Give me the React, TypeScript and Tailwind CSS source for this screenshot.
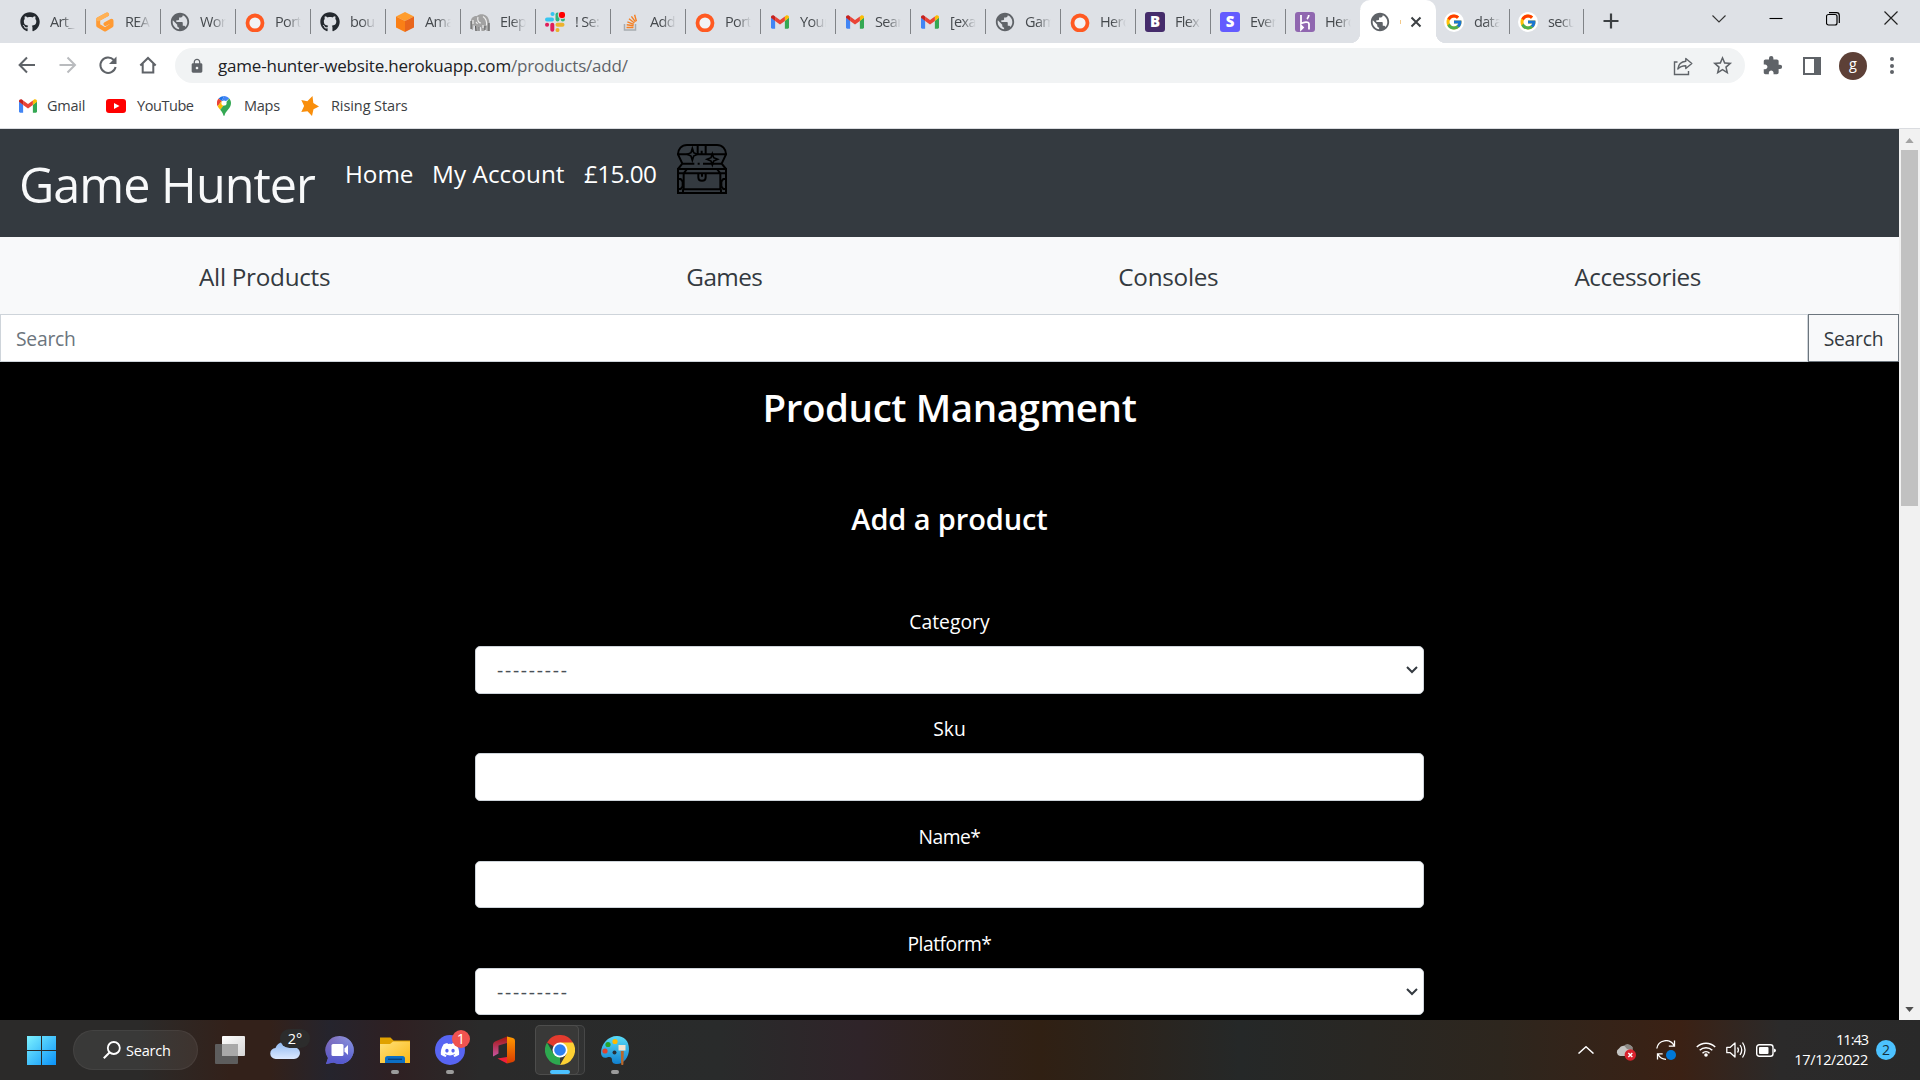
import React from "react";
import { FaGithub, FaDiscord } from "react-icons/fa";
import { FcGoogle } from "react-icons/fc";
import { MdExtension, MdPublic, MdLock, MdStarBorder } from "react-icons/md";

function Gmail({ className }: { className: string }) {
  return (
    <svg viewBox="0 0 24 18" className={className}>
      <path d="M0 3v13.4C0 17.3.7 18 1.6 18h3.9V7.4L0 3z" fill="#4285f4" />
      <path d="M18.5 18h3.9c.9 0 1.6-.7 1.6-1.6V3l-5.5 4.4V18z" fill="#34a853" />
      <path d="M18.5 1.5v6L24 3.300V2.500C24 .2 21.400-.8 19.700.6l-1.200.9z" fill="#fbbc04" />
      <path d="M5.500 7.500v-6L12 6.300l6.500-4.800v6L12 12.300 5.500 7.500z" fill="#ea4335" />
      <path d="M0 2.500v.8l5.500 4.200v-6L4.300.6C2.600-.8 0 .2 0 2.500z" fill="#c5221f" />
    </svg>
  );
}

function Gitpod() {
  return (
    <svg viewBox="0 0 20 20" className="size-5">
      <path d="M12 2.500 3.200 7.200v6.300l6.800 4 6.500-4V8.800l-6 3.200" fill="none" stroke="#ff9a33" strokeWidth="4" strokeLinejoin="round" strokeLinecap="round" />
      <path d="M12 2.500 3.200 7.200" fill="none" stroke="#ffb155" strokeWidth="4" strokeLinecap="round" />
    </svg>
  );
}

function Ring() {
  return (
    <svg viewBox="0 0 20 20" className="size-5">
      <circle cx="10" cy="11" r="7.500" fill="#fff" fillOpacity=".6" stroke="#ff5a22" strokeWidth="3.800" />
    </svg>
  );
}

function Cube() {
  return (
    <svg viewBox="0 0 20 20" className="size-5">
      <path d="M10 0l9 4.500L10 9 1 4.500z" fill="#ff9d2e" />
      <path d="M1 4.500L10 9v11l-9-4.500z" fill="#fa7f16" />
      <path d="M19 4.500L10 9v11l9-4.500z" fill="#e8651c" />
    </svg>
  );
}

function Elephant() {
  return (
    <svg viewBox="0 0 20 20" className="size-5">
      <path d="M1 9c0-3 2.500-5.500 6-5 2-2.500 7-2.500 9.500 0C19 6 20 10 19.500 19h-3l-.5-5-1.500 5h-3l-.5-4H8.500L8 19H5.500L5 14l-1.500-1L3 18l-2-1z" fill="#a2a2a2" />
      <path d="M8 5c-1 3 .5 6 3 6M3 8v4M13 4.500c3 2 4 5 3.500 9M6 10l1.500 2M10 16v3M13 13v3" stroke="#ededed" strokeWidth="1.200" fill="none" />
      <path d="M1 9v8M19 11v8M5.500 14l.5 5M9 15v4M15 14v4" stroke="#555" strokeWidth="1" fill="none" />
    </svg>
  );
}

function Slack() {
  return (
    <svg viewBox="0 0 20 20" className="size-5">
      <g strokeWidth="4" strokeLinecap="round">
        <path d="M2 7.500h5" stroke="#36c5f0" />
        <path d="M7.500 2h.1" stroke="#36c5f0" />
        <path d="M12.500 2.500v5" stroke="#2eb67d" />
        <path d="M17.800 7.500h.1" stroke="#2eb67d" />
        <path d="M12.500 12.700h5" stroke="#ecb22e" />
        <path d="M12.500 18v.1" stroke="#ecb22e" />
        <path d="M7.300 12.700v5" stroke="#e01e5a" />
        <path d="M2 12.700h.1" stroke="#e01e5a" />
      </g>
      <circle cx="17" cy="3" r="3.800" fill="#f00" stroke="#dee1e6" strokeWidth="1" />
    </svg>
  );
}

function StackOverflow() {
  return (
    <svg viewBox="0 0 20 20" className="size-5">
      <path d="M4.500 12v6h11v-6" fill="none" stroke="#a7acb0" strokeWidth="1.500" />
      <path d="M6.500 15.500h7M6.700 12.700l6.900 1M7.400 9.800l6.400 2.500M9 6.800l5.400 4.200M11.400 4.300l4 5.500M14.600 2.800l1.800 6.400" stroke="#f48024" strokeWidth="1.400" />
    </svg>
  );
}

function Letter({ char, className }: { char: string; className: string }) {
  return <span className={`flex size-5 items-center justify-center rounded-[3px] text-[15px] leading-none font-extrabold text-white ${className}`}>{char}</span>;
}

const globe = <MdPublic className="-mx-px size-[22px] text-[#5f6368]" />;
const mail = <Gmail className="mx-px h-3.5 w-[18px]" />;
const google = (
  <span className="flex size-5 items-center justify-center rounded-full bg-white">
    <FcGoogle className="size-[18px]" />
  </span>
);

const tabs: [React.ReactNode, string][] = [
  [<FaGithub className="size-5 text-[#24292f]" />, "Art_"],
  [<Gitpod />, "REA"],
  [globe, "Wor"],
  [<Ring />, "Port"],
  [<FaGithub className="size-5 text-[#24292f]" />, "bou"],
  [<Cube />, "Ama"],
  [<Elephant />, "Elep"],
  [<Slack />, "! Se:"],
  [<StackOverflow />, "Add"],
  [<Ring />, "Port"],
  [mail, "Your"],
  [mail, "Sear"],
  [mail, "[exa"],
  [globe, "Gam"],
  [<Ring />, "Hero"],
  [<Letter char="B" className="bg-[#452c6b]" />, "Flex"],
  [<Letter char="S" className="bg-[#635bff]" />, "Even"],
  [
    <span className="flex size-5 items-center justify-center rounded-[3px] bg-[#9067b0]">
      <svg viewBox="0 0 20 20" className="size-5">
        <path d="M6 3v8.500c2.500-1.300 8-2.500 8 .5v5.500M13.800 3c0 1.800-.8 3-1.800 4M6 13.500v4l2-2z" fill="none" stroke="#fff" strokeWidth="1.800" />
      </svg>
    </span>,
    "Hero",
  ],
];

function Tab({ icon, text }: { icon: React.ReactNode; text: string }) {
  return (
    <div className="flex h-[43px] w-[75px] shrink-0 items-center pl-[9px]">
      <span className="flex size-5 shrink-0 items-center justify-center">{icon}</span>
      <span className="ml-2.5 w-[26px] overflow-hidden text-[14.500px] leading-5 tracking-[-0.045em] whitespace-nowrap text-[#45494d] [mask-image:linear-gradient(to_right,black_45%,transparent)]">
        {text}
      </span>
      <span className="ml-[9px] h-[25px] w-px shrink-0 bg-[#808387]" />
    </div>
  );
}

function TabStrip() {
  return (
    <div className="flex h-[43px] bg-[#dee1e6] pl-[11px]">
      {tabs.map(([icon, text], i) => (
        <Tab key={i} icon={icon} text={text} />
      ))}
      <div className="relative -ml-px flex h-[43px] w-[76px] shrink-0 items-center rounded-t-[10px] bg-white pl-2.5">
        <span className="absolute bottom-0 -left-2.5 size-2.5 bg-[radial-gradient(circle_at_0_0,transparent_10px,white_10.5px)]" />
        <span className="absolute -right-2.5 bottom-0 size-2.5 bg-[radial-gradient(circle_at_100%_0,transparent_10px,white_10.5px)]" />
        <MdPublic className="-ml-px size-[22px] text-[#5f6368]" />
        <span className="ml-[9px] h-1 w-px bg-[#f3c98a]" />
        <svg viewBox="0 0 12 12" className="ml-[9px] size-3">
          <path d="M1.500 1.500l9 9M10.500 1.500l-9 9" stroke="#3c4043" strokeWidth="2" />
        </svg>
      </div>
      <div className="-ml-px flex">
        <Tab icon={google} text="data" />
        <div className="-ml-px">
          <Tab icon={google} text="secu" />
        </div>
      </div>
      <svg viewBox="0 0 16 16" className="mt-[13px] ml-[19px] size-4">
        <path d="M8 .5v15M.5 8h15" stroke="#3c4043" strokeWidth="2.200" />
      </svg>
      <div className="mt-3 ml-auto flex pr-[22px]">
        <svg viewBox="0 0 14 14" className="size-3.5">
          <path d="M.5 3.500L7 10l6.500-6.500" fill="none" stroke="#333" strokeWidth="1.100" />
        </svg>
        <svg viewBox="0 0 14 14" className="ml-[43px] size-3.5">
          <path d="M.5 6.500h13" stroke="#000" strokeWidth="1.100" />
        </svg>
        <svg viewBox="0 0 14 14" className="ml-[43px] size-3.5">
          <rect x=".5" y="2.500" width="10.500" height="10.500" rx="2" fill="none" stroke="#000" strokeWidth="1.200" />
          <path d="M3 .6h7.500a2.800 2.800 0 012.800 2.800V11" fill="none" stroke="#000" strokeWidth="1.200" />
        </svg>
        <svg viewBox="0 0 14 14" className="-mt-px ml-[44px] size-3.5">
          <path d="M.5 .5l13 13M13.500 .5l-13 13" stroke="#222" strokeWidth="1.200" />
        </svg>
      </div>
    </div>
  );
}

function Toolbar() {
  return (
    <div className="flex h-[45px] items-center bg-white pl-[17px] text-[#5f6368]">
      <svg viewBox="0 0 20 20" className="-mt-px size-5">
        <path d="M18 10H3M10 2.500L2.600 10l7.400 7.500" fill="none" stroke="currentColor" strokeWidth="2" />
      </svg>
      <svg viewBox="0 0 20 20" className="-mt-px ml-5 size-5 text-[#b9bbbe]">
        <path d="M2.500 10h15M10.500 2.500L18 10l-7.500 7.500" fill="none" stroke="currentColor" strokeWidth="2" />
      </svg>
      <svg viewBox="0 0 20 20" className="-mt-px ml-[21px] size-5">
        <path d="M15.800 5A7.700 7.700 0 1017.600 12" fill="none" stroke="currentColor" strokeWidth="2" />
        <path d="M18.500 1.500V9H11z" fill="currentColor" />
      </svg>
      <svg viewBox="0 0 20 20" className="-mt-px ml-5 size-5">
        <path d="M2.300 10.500L10 3l7.700 7.500M4.700 8.500v9h10.600v-9" fill="none" stroke="currentColor" strokeWidth="2" />
      </svg>
      <div className="ml-[17px] flex h-[35px] w-[1570px] items-center rounded-full bg-[#f1f3f4] pl-[14px]">
        <MdLock className="size-4 text-[#5f6368]" />
        <span className="ml-[13px] text-[17px] leading-[35px] tracking-[-0.012em] text-[#5f6368]">
          <span className="text-[#202124]">game-hunter-website.herokuapp.com</span>/products/add/
        </span>
        <svg viewBox="0 0 20 20" className="ml-auto size-5">
          <path d="M4.500 6H1.500v12.500h14V15" fill="none" stroke="currentColor" strokeWidth="1.400" />
          <path d="M12.800 2.500l6 5-6 5V9.700c-3.500 0-6 .8-8 3.300.5-4 3-7.200 8-7.700z" fill="none" stroke="currentColor" strokeWidth="1.400" strokeLinejoin="round" />
        </svg>
        <MdStarBorder className="mr-[11px] ml-[18px] size-[23px]" />
      </div>
      <MdExtension className="ml-[17px] size-[21px]" />
      <svg viewBox="0 0 18 18" className="ml-[20px] size-[18px]">
        <path d="M1 1h16v16H1z" fill="none" stroke="currentColor" strokeWidth="2" />
        <path d="M11 1h6v16h-6z" fill="currentColor" />
      </svg>
      <span className="ml-[18px] flex size-7 items-center justify-center rounded-full bg-[#5d4037] pb-0.5 text-[14.500px] leading-none text-white">g</span>
      <span className="ml-[23px] flex flex-col gap-[2.500px]">
        <i className="size-[4px] rounded-full bg-[#5f6368]" />
        <i className="size-[4px] rounded-full bg-[#5f6368]" />
        <i className="size-[4px] rounded-full bg-[#5f6368]" />
      </span>
    </div>
  );
}

function Bookmarks() {
  return (
    <div className="flex h-[41px] items-center border-b border-[#dadce0] bg-white pb-[5px] pl-[19px] text-[14.500px] leading-5 tracking-[-0.018em] text-[#3c4043]">
      <Gmail className="h-3.5 w-[18px]" />
      <span className="ml-2.5 w-[59px]">Gmail</span>
      <svg viewBox="0 0 20 14" className="h-3.5 w-5">
        <rect width="20" height="14" rx="3" fill="#f00" />
        <path d="M8 4l5.500 3L8 10z" fill="#fff" />
      </svg>
      <span className="ml-[11px] w-20 tracking-[-0.03em]">YouTube</span>
      <svg viewBox="0 0 14 20" className="h-5 w-3.5">
        <path d="M7 0a7 7 0 00-5.400 2.500L4.700 5z" fill="#1a73e8" />
        <path d="M1.600 2.500A7 7 0 00.7 10.200L4.700 5z" fill="#ea4335" />
        <path d="M7 0c2 0 4 .9 5.200 2.500L4.800 8.600 4.700 5z" fill="#4285f4" />
        <path d="M.7 10.200c.5 1 1.400 2.200 2.500 3.500L9.500 6.200 4.700 5z" fill="#fbbc04" />
        <path d="M3.200 13.700C5 16 6 17.500 6.400 19.300c.2.900 1 .9 1.200 0C8.500 15 14 12.500 14 7c0-1.700-.7-3.300-1.800-4.500z" fill="#34a853" />
        <circle cx="7" cy="7" r="2.600" fill="#fff" />
      </svg>
      <span className="ml-[13px] w-[57px]">Maps</span>
      <svg viewBox="0 0 18 20" className="h-5 w-[18px]">
        <path d="M11.500 0l.8 7 5.700 3.500-5.500 2.700L11 20l-4.500-4.800L.3 16l2.800-6L.3 4l6 1.200z" fill="#f98e0b" />
      </svg>
      <span className="ml-3 tracking-[-0.006em]">Rising Stars</span>
    </div>
  );
}

function Chest() {
  return (
    <svg viewBox="0 0 150 150" className="mt-[15px] size-[50px]">
      <g fill="none" stroke="#000" strokeWidth="6">
        <path d="M3 31C3 15 14 3 30 3h90c16 0 27 12 27 28" />
        <path d="M3 31l13 28L3 75M147 31l-13 28 13 16M0 31h34M58 31h92M16 59h36M62 59h6M78 59h56M62 3v28M86 3v28M74 20v10" />
        <path d="M3 75h144v72H3zM6 88h138M20 88v48h110V88M30 75l-10 13M120 75l10 13M3 105h8l6 8v14l-6 8H3M147 105h-8l-6 8v14l6 8h8M18 136v10M132 136v10M20 136h110" />
        <path d="M64 88v12c0 14 22 14 22 0V88M75 88v10" />
      </g>
      <path d="M46 13l4 13 11 5-11 5-4 13-4-13-11-5 11-5zM106 29l4 12 12 5-12 5-4 12-4-12-12-5 12-5z" fill="#343a40" stroke="#000" strokeWidth="5" />
    </svg>
  );
}

function SiteHeader() {
  return (
    <>
      <header className="flex h-[108px] items-start bg-[#343a40] pl-[19px] text-white">
        <h1 className="mt-[25px] w-[326px] text-[48.500px] leading-[60px] tracking-[-0.020em] whitespace-nowrap text-[#f8f9fa]">Game Hunter</h1>
        <nav className="mt-[27px] flex text-[24.300px] leading-9 whitespace-nowrap">
          <a className="w-[87px] tracking-[-0.003em]">Home</a>
          <a className="w-[152px] tracking-[0.002em]">My Account</a>
          <a className="w-[93px] tracking-[-0.024em]">£15.00</a>
        </nav>
        <Chest />
      </header>
      <nav className="flex h-[77px] justify-around bg-[#f8f9fa] pt-[2px] pr-5 pl-[21px] text-[24.300px] leading-[75px] text-[#343a40]">
        <a className="tracking-[-0.012em]">All Products</a>
        <a className="tracking-[-0.024em]">Games</a>
        <a className="tracking-[-0.012em]">Consoles</a>
        <a className="tracking-[-0.018em]">Accessories</a>
      </nav>
      <div className="flex h-12 text-[19.300px] leading-[48px] tracking-[-0.012em]">
        <div className="h-12 flex-1 border border-[#ced4da] bg-white pl-[15px] text-[#6c757d]">Search</div>
        <button className="h-12 w-[91px] border border-[#6c757d] bg-[#f8f9fa] pt-px leading-[46px] text-[#343a40]">Search</button>
      </div>
    </>
  );
}

function Field({ label, select, tracking }: { label: string; select?: boolean; tracking: string }) {
  return (
    <div className="mb-[19.800px] flex w-[949px] flex-col">
      <label className={`text-center text-[19.300px] leading-8 ${tracking}`}>{label}</label>
      <div className="mt-2 flex h-[47.500px] items-center justify-between rounded-[5px] border border-[#ced4da] bg-white pr-[5px] pl-[21px] text-[#495057]">
        {select && (
          <>
            <span className="text-[19.300px] leading-[47px] tracking-[1.750px]">---------</span>
            <svg viewBox="0 0 12 8" className="h-2 w-3">
              <path d="M1 1l5 5 5-5" fill="none" stroke="#343a40" strokeWidth="2" />
            </svg>
          </>
        )}
      </div>
    </div>
  );
}

function Page() {
  return (
    <div className="flex h-[891px] overflow-hidden">
      <div className="w-[1899px] bg-black">
        <SiteHeader />
        <main className="flex flex-col items-center text-white">
          <h2 className="mt-[21px] text-[38.500px] leading-[48px] font-semibold tracking-[-0.011em]">Product Managment</h2>
          <h3 className="mt-[70px] text-[29px] leading-9 font-semibold tracking-[-0.004em]">Add a product</h3>
          <form className="mt-[69px]">
            <Field label="Category" select tracking="tracking-[0.002em]" />
            <Field label="Sku" tracking="tracking-[-0.002em]" />
            <Field label="Name*" tracking="tracking-[-0.028em]" />
            <Field label="Platform*" select tracking="tracking-[-0.026em]" />
          </form>
        </main>
      </div>
      <div className="flex w-[21px] flex-col items-center bg-[#f1f1f1]">
        <svg viewBox="0 0 10 6" className="mt-[9px] h-[5px] w-[9px]">
          <path d="M0 6l5-6 5 6z" fill="#a3a3a3" />
        </svg>
        <span className="mt-[7px] h-[356px] w-[17px] bg-[#c1c1c1]" />
        <svg viewBox="0 0 10 6" className="mt-auto mb-2 h-[5px] w-[9px]">
          <path d="M0 0l5 6 5-6z" fill="#505050" />
        </svg>
      </div>
    </div>
  );
}

function Dot() {
  return <span className="absolute top-[50px] left-1/2 h-1 w-2 -translate-x-1/2 rounded-full bg-[#9b9b9b]" />;
}

function Taskbar() {
  return (
    <footer className="flex h-[60px] items-center bg-[linear-gradient(90deg,#2b2a29_0,#2b2a29_140px,#33211a_230px,#33211a_270px,#25242d_330px,#2f2022_395px,#2a2a2a_480px,#292b2b_720px,#2f2429_860px,#302013_1040px,#252828_1240px,#2d261e_1500px,#3b2114_1680px,#2b2a2a_1780px,#292929_1920px)] text-white">
      <svg viewBox="0 0 29 29" className="ml-[27px] size-[29px]">
        <defs>
          <linearGradient id="win" gradientUnits="userSpaceOnUse" x1="0" y1="0" x2="29" y2="29">
            <stop stopColor="#7df2ff" />
            <stop offset="1" stopColor="#0a92f8" />
          </linearGradient>
        </defs>
        <path d="M0 0h14v14H0zM15 0h14v14H15zM0 15h14v14H0zM15 15h14v14H15z" fill="url(#win)" />
      </svg>
      <div className="ml-[17px] flex h-10 w-[125px] items-center rounded-full border border-white/5 bg-white/[0.07] pl-[29px]">
        <svg viewBox="0 0 18 18" className="size-[18px]">
          <circle cx="10.800" cy="7" r="6" fill="none" stroke="#fff" strokeWidth="1.800" />
          <path d="M6.500 11.500L.8 17.200" stroke="#fff" strokeWidth="2" />
        </svg>
        <span className="mt-px ml-[5px] text-[14.500px] leading-5 tracking-[-0.015em]">Search</span>
      </div>
      <svg viewBox="0 0 30 28" className="ml-[17px] h-7 w-[30px]">
        <defs>
          <linearGradient id="tv" x2="1" y2="1">
            <stop stopColor="#fff" />
            <stop offset="1" stopColor="#d5d5d5" />
          </linearGradient>
        </defs>
        <rect x="7" width="23" height="20" rx="1" fill="url(#tv)" />
        <rect y="8" width="23" height="20" rx="1" fill="#5d5d5d" />
        <path d="M7 8h16v12H7z" fill="#a9a9a9" />
      </svg>
      <div className="relative ml-[25px] h-[30px] w-[30px]">
        <svg viewBox="0 0 30 30" className="size-[30px]">
          <defs>
            <linearGradient id="cl" x2="0" y2="1">
              <stop stopColor="#8fb8f0" />
              <stop offset="1" stopColor="#dce9ff" />
            </linearGradient>
          </defs>
          <path d="M6 24a5.500 5.500 0 01-.5-11A8.500 8.500 0 0121 11.500c4 0 9 2 9 6.500a6 6 0 01-6 6z" fill="url(#cl)" />
        </svg>
        <span className="absolute -top-[6px] left-2.5 flex h-[19px] w-[30px] items-center justify-center rounded-full bg-[#2c2c2c] pt-px text-[14.500px] leading-none">2°</span>
      </div>
      <svg viewBox="0 0 30 30" className="ml-[25px] size-[30px]">
        <defs>
          <linearGradient id="ch" x2="1" y2="0">
            <stop stopColor="#8168b5" />
            <stop offset="1" stopColor="#8d9ce6" />
          </linearGradient>
          <linearGradient id="ch2" x2="0" y2="1">
            <stop stopColor="#5b5fc7" stopOpacity="0" />
            <stop offset="1" stopColor="#5156d0" />
          </linearGradient>
        </defs>
        <path d="M15 1a14 14 0 11-6.500 26.500L1 29l2-6A14 14 0 0115 1z" fill="url(#ch)" />
        <path d="M15 1a14 14 0 11-6.500 26.500L1 29l2-6A14 14 0 0115 1z" fill="url(#ch2)" />
        <rect x="6.500" y="9" width="12" height="12" rx="1.500" fill="#fff" />
        <path d="M19.500 13.500l3.500-3.500v10l-3.500-3.500z" fill="#fff" />
      </svg>
      <div className="relative ml-[25px] flex h-[60px] items-center">
        <svg viewBox="0 0 30 28" className="h-7 w-[30px]">
          <defs>
            <linearGradient id="fo" x2="1" y2="1">
              <stop stopColor="#ffe07a" />
              <stop offset="1" stopColor="#fbb914" />
            </linearGradient>
          </defs>
          <path d="M0 1.500h10.500l3 3H30V12H0z" fill="#e0a100" />
          <path d="M0 8h10l3-2.500h17V27H0z" fill="url(#fo)" />
          <path d="M5 27v-4.500q0-2.500 2.500-2.500h15q2.500 0 2.500 2.500V27z" fill="#0c6fc4" />
          <path d="M8 23.300h14" stroke="#06427e" strokeWidth="1.400" />
        </svg>
        <Dot />
      </div>
      <div className="relative ml-[25px] flex h-[60px] items-center">
        <span className="flex size-[30px] items-center justify-center rounded-full bg-[#5865f2]">
          <FaDiscord className="size-[20px]" />
        </span>
        <span className="absolute top-[10px] left-[17px] flex size-[18px] items-center justify-center rounded-full bg-[#ef5350] text-[14.500px] leading-none">1</span>
        <Dot />
      </div>
      <svg viewBox="0 0 22 28" className="ml-7 h-7 w-[22px]">
        <defs>
          <linearGradient id="of" x2="0" y2="1">
            <stop stopColor="#a3140f" />
            <stop offset="1" stopColor="#c855a0" />
          </linearGradient>
          <linearGradient id="of2" x2="0" y2="1">
            <stop stopColor="#ff9a00" />
            <stop offset="1" stopColor="#d83b01" />
          </linearGradient>
        </defs>
        <path d="M14 .5L2 5.500Q0 6.300 0 8.500v12l5.500-3V9.500L14 7z" fill="url(#of)" />
        <path d="M14 .5l6 1.500q2 .6 2 2.500v19q0 1.900-2 2.500l-6 1.500z" fill="url(#of2)" />
        <path d="M4.500 22.500L14 21v6.500z" fill="#f0203a" />
      </svg>
      <div className="relative ml-5 flex h-[50px] w-[50px] items-center">
        <span className="absolute inset-y-0 right-0 w-10 rounded-[5px] border border-white/10 bg-white/[0.04]" />
        <span className="absolute inset-y-0 left-0 w-11 rounded-[5px] border border-white/10 bg-[#393938]" />
        <svg viewBox="0 0 48 48" className="relative ml-[9.500px] size-[30px]">
          <path d="M24 24L3.200 12A24 24 0 0144.800 12z" fill="#e33b2e" />
          <path d="M24 24l0 24A24 24 0 013.200 12l10.400 18z" fill="#2da94f" />
          <path d="M44.800 12A24 24 0 0124 48l10.400-18L24 12z" fill="#fdd033" />
          <circle cx="24" cy="24" r="12" fill="#fff" />
          <circle cx="24" cy="24" r="9.300" fill="#2d7ff0" />
        </svg>
        <span className="absolute top-[45px] left-[15px] h-1 w-5 rounded-full bg-[#4cc2ff]" />
      </div>
      <div className="relative ml-[15px] flex h-[60px] items-center">
        <svg viewBox="0 0 30 30" className="size-[30px]">
          <defs>
            <linearGradient id="pa" x2="0" y2="1">
              <stop stopColor="#59dcf8" />
              <stop offset="1" stopColor="#1180cf" />
            </linearGradient>
          </defs>
          <path d="M17 1C8 1 1 9 1 18c0 4 3 5.500 6 4.500 3.500-1 5 0 5 2.500 0 3 2 4 5 4 7 0 12-7 12-15S24 1 17 1z" fill="url(#pa)" />
          <circle cx="15" cy="6.500" r="2.600" fill="#ffb900" />
          <circle cx="8" cy="9.500" r="2.600" fill="#28a428" />
          <circle cx="5" cy="16" r="2.600" fill="#e0442e" />
          <circle cx="14.500" cy="17.500" r="2" fill="#26303a" />
          <path d="M18.500 10h7v5.500h-7z" fill="#f2e3cf" />
          <path d="M20.800 16h3l-.4 13.500q-1.200 1-2.200 0z" fill="#b8682c" />
        </svg>
        <Dot />
      </div>

      <div className="ml-auto flex items-center">
        <svg viewBox="0 0 16 8" className="h-2 w-4">
          <path d="M.5 7.500L8 .8l7.500 6.700" fill="none" stroke="#fff" strokeWidth="1.500" />
        </svg>
        <svg viewBox="0 0 20 18" className="mt-1 ml-[22px] h-[18px] w-5">
          <path d="M4 13a4 4 0 01-1-7.500Q5 2 9 3q3-3 7.500 1V13z" fill="#c4c4c2" />
          <path d="M8 2.500Q12-1 16 3.500V7l-5-1z" fill="#8b8884" />
          <circle cx="14.300" cy="12" r="5.700" fill="#d9232e" />
          <path d="M12.300 10l4 4M16.300 10l-4 4" stroke="#fff" strokeWidth="1.500" />
        </svg>
        <svg viewBox="0 0 20 20" className="ml-5 size-5">
          <path d="M.8 8.500A9.200 9.200 0 0118 5.500M18.500.5v5.700h-5.700M10 19.300a9 9 0 01-8-5M1.500 19.500v-5.700h5.200" fill="none" stroke="#fff" strokeWidth="1.300" />
          <circle cx="15" cy="15" r="5" fill="#0078d7" />
        </svg>
        <svg viewBox="0 0 20 16" className="mb-[2px] ml-5 h-4 w-5">
          <path d="M.8 6a13 13 0 0118.400 0M3.700 9.200a9 9 0 0112.600 0M6.500 12.200a5 5 0 017 0" fill="none" stroke="#fff" strokeWidth="1.500" />
          <circle cx="10" cy="14" r="1.800" fill="#fff" />
        </svg>
        <svg viewBox="0 0 20 18" className="ml-2.5 h-[18px] w-5">
          <path d="M.8 6.300h3.500L9 2v14l-4.700-4.300H.8z" fill="none" stroke="#fff" strokeWidth="1.300" strokeLinejoin="round" />
          <path d="M11.500 6.500q1.800 2.500 0 5M14 4q3.500 5 0 10M16.500 1.500q5 7.500 0 15" fill="none" stroke="#fff" strokeWidth="1.300" />
        </svg>
        <svg viewBox="0 0 20 13" className="ml-2.5 h-[13px] w-5">
          <rect x=".7" y=".7" width="16.300" height="11.600" rx="2.500" fill="none" stroke="#fff" strokeWidth="1.400" />
          <rect x="3" y="3" width="9.500" height="7" rx="1" fill="#fff" />
          <path d="M18 4.500q2 .3 2 2t-2 2z" fill="#fff" />
        </svg>
        <div className="ml-[18px] flex w-[74px] flex-col items-end text-[14.500px] leading-5 whitespace-nowrap">
          <span className="tracking-[-0.070em]">11:43</span>
          <span className="tracking-[-0.022em]">17/12/2022</span>
        </div>
        <span className="mr-6 ml-[8px] flex size-5 items-center justify-center rounded-full bg-[#4cc2ff] text-[14px] leading-none text-[#15303d]">2</span>
      </div>
    </footer>
  );
}

export default function App() {
  return (
    <div className="h-[1080px] w-[1920px] overflow-hidden font-['Open_Sans','Noto_Sans',sans-serif]">
      <TabStrip />
      <Toolbar />
      <Bookmarks />
      <Page />
      <Taskbar />
    </div>
  );
}
